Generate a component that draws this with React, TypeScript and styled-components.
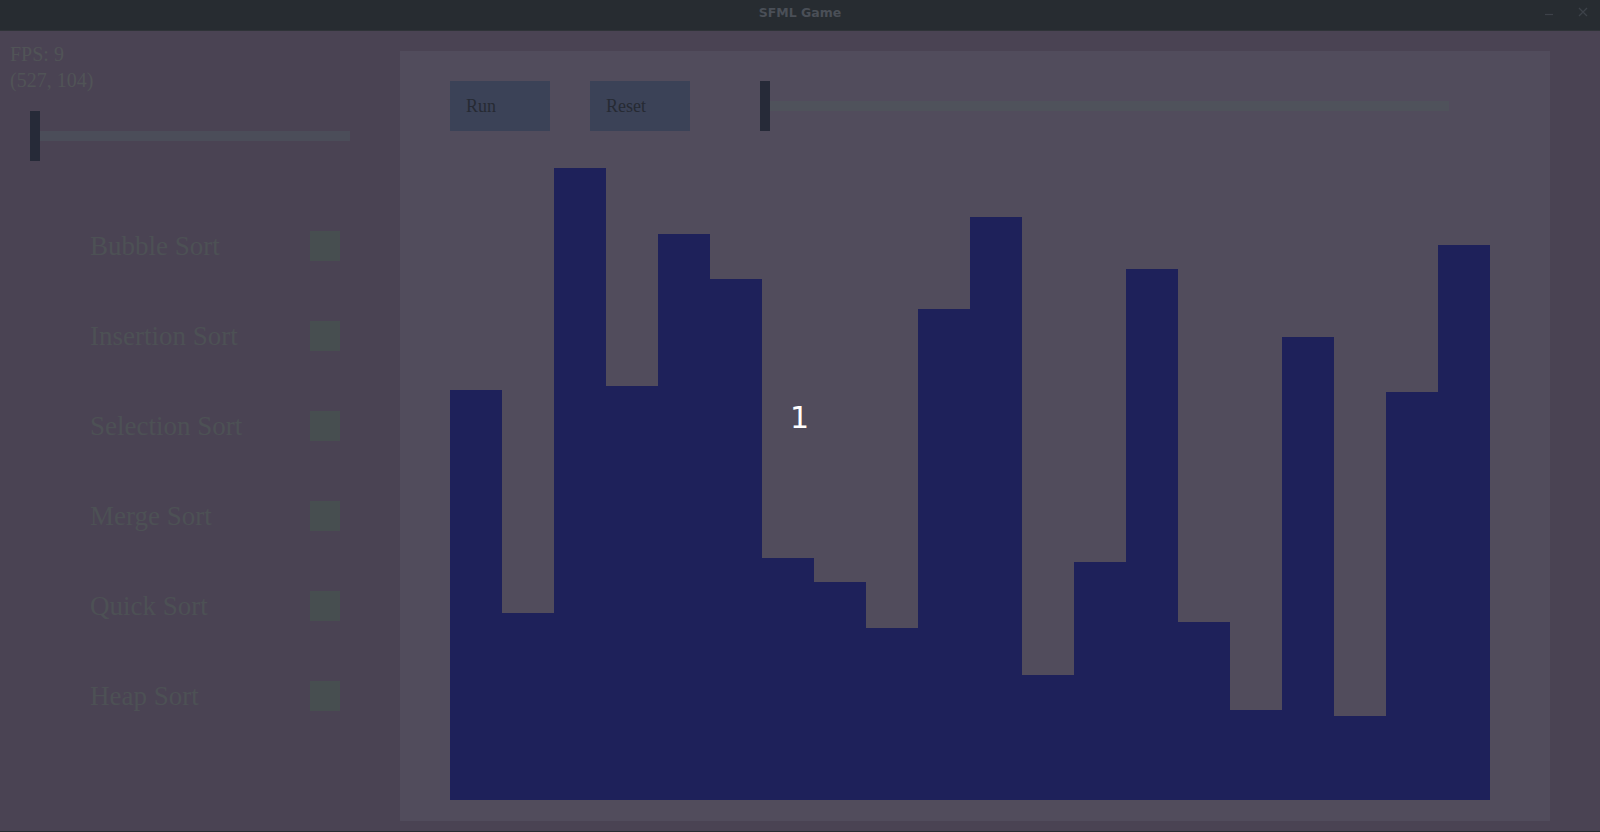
import React from "react";
import styled, { createGlobalStyle } from "styled-components";

const GlobalStyle = createGlobalStyle`
  html, body { margin: 0; padding: 0; background: #4a4353; }
  * { box-sizing: border-box; }
`;

const Window = styled.div`
  width: 1600px;
  height: 832px;
  display: flex;
  flex-direction: column;
  background: #4a4353;
  overflow: hidden;
`;

const TitleBar = styled.div`
  height: 31px;
  flex: none;
  background: #272c31;
  position: relative;
  display: flex;
  align-items: center;
  justify-content: center;
  border-bottom: 1px solid #2f3338;
`;

const Title = styled.span`
  font-family: "DejaVu Sans", "Noto Sans", sans-serif;
  font-weight: bold;
  font-size: 12.5px;
  color: #4a4f57;
  margin-top: -5px;
`;

const WindowControls = styled.div`
  position: absolute;
  right: 12px;
  top: 6px;
  display: flex;
  gap: 24px;
  align-items: center;
`;

const Body = styled.div`
  flex: 1;
  display: flex;
  border-bottom: 1px solid #272c31;
`;

const Sidebar = styled.div`
  width: 400px;
  flex: none;
  padding-top: 10px;
  display: flex;
  flex-direction: column;
`;

const Stat = styled.div`
  font-family: "Liberation Serif", "DejaVu Serif", serif;
  font-size: 20px;
  line-height: 26px;
  color: #515457;
  padding-left: 10px;
`;

const SliderRow = styled.div<{ $ml: number; $mt: number }>`
  display: flex;
  align-items: center;
  height: 50px;
  margin-left: ${(p) => p.$ml}px;
  margin-top: ${(p) => p.$mt}px;
`;

const Handle = styled.div`
  width: 10px;
  height: 50px;
  background: #262a38;
`;

const Track = styled.div<{ $w: number; $c: string }>`
  width: ${(p) => p.$w}px;
  height: 10px;
  background: ${(p) => p.$c};
`;

const SortList = styled.div`
  margin-top: 70px;
  display: flex;
  flex-direction: column;
  gap: 60px;
`;

const SortRow = styled.div`
  display: flex;
  align-items: center;
  height: 30px;
  width: 340px;
  padding-left: 90px;
`;

const SortLabel = styled.span`
  flex: 1;
  font-family: "Liberation Serif", "DejaVu Serif", serif;
  font-size: 27px;
  line-height: 30px;
  color: #4d5155;
`;

const Check = styled.div`
  width: 30px;
  height: 30px;
  background: #474e50;
`;

const Panel = styled.div`
  width: 1150px;
  flex: none;
  margin: 20px 0 10px;
  background: #514c5c;
  padding: 30px 50px 21px;
  display: flex;
  flex-direction: column;
  position: relative;
`;

const Toolbar = styled.div`
  display: flex;
  align-items: center;
  height: 50px;
  flex: none;
`;

const Button = styled.div<{ $ml?: number }>`
  width: 100px;
  height: 50px;
  background: #3b4257;
  margin-left: ${(p) => p.$ml ?? 0}px;
  display: flex;
  align-items: center;
  padding-left: 16px;
  font-family: "Liberation Serif", "DejaVu Serif", serif;
  font-size: 18px;
  color: #262a33;
`;

const Chart = styled.div`
  flex: 1;
  display: flex;
  align-items: flex-end;
`;

const Bar = styled.div`
  width: 52px;
  flex: none;
  background: #1e215a;
`;

const Counter = styled.div`
  position: absolute;
  left: 390px;
  top: 352px;
  font-family: "DejaVu Sans", sans-serif;
  font-size: 30px;
  line-height: 30px;
  color: #ffffff;
`;

const tops = [390, 613, 168, 386, 234, 279, 558, 582, 628, 309, 217, 675, 562, 269, 622, 710, 337, 716, 392, 245];
const sorts = ["Bubble Sort", "Insertion Sort", "Selection Sort", "Merge Sort", "Quick Sort", "Heap Sort"];

export default function App() {
  return (
    <>
      <GlobalStyle />
      <Window>
        <TitleBar>
          <Title>SFML Game</Title>
          <WindowControls>
            <svg width="10" height="12" viewBox="0 0 10 12">
              <line x1="1" y1="8.5" x2="9" y2="8.5" stroke="#3d4249" strokeWidth="1.2" />
            </svg>
            <svg width="10" height="12" viewBox="0 0 10 12">
              <path d="M1 2 L9 10 M9 2 L1 10" stroke="#3d4249" strokeWidth="1.3" />
            </svg>
          </WindowControls>
        </TitleBar>
        <Body>
          <Sidebar>
            <Stat>FPS: 9</Stat>
            <Stat>(527, 104)</Stat>
            <SliderRow $ml={30} $mt={18}>
              <Handle />
              <Track $w={310} $c="#4b4d59" />
            </SliderRow>
            <SortList>
              {sorts.map((s) => (
                <SortRow key={s}>
                  <SortLabel>{s}</SortLabel>
                  <Check />
                </SortRow>
              ))}
            </SortList>
          </Sidebar>
          <Panel>
            <Toolbar>
              <Button>Run</Button>
              <Button $ml={40}>Reset</Button>
              <SliderRow $ml={70} $mt={0}>
                <Handle />
                <Track $w={679} $c="#4f525b" />
              </SliderRow>
            </Toolbar>
            <Chart>
              {tops.map((t, i) => (
                <Bar key={i} style={{ height: 800 - t }} />
              ))}
            </Chart>
            <Counter>1</Counter>
          </Panel>
        </Body>
      </Window>
    </>
  );
}
